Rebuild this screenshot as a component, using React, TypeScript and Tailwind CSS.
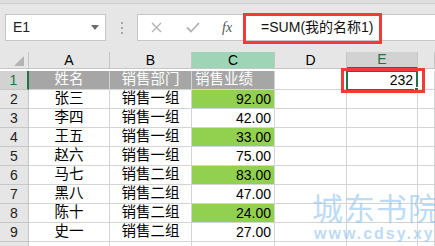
import React from "react";

const rows = [
  { n: "2", name: "张三", dept: "销售一组", v: "92.00", hi: true },
  { n: "3", name: "李四", dept: "销售一组", v: "42.00", hi: false },
  { n: "4", name: "王五", dept: "销售一组", v: "33.00", hi: true },
  { n: "5", name: "赵六", dept: "销售一组", v: "75.00", hi: false },
  { n: "6", name: "马七", dept: "销售二组", v: "83.00", hi: true },
  { n: "7", name: "黑八", dept: "销售二组", v: "47.00", hi: false },
  { n: "8", name: "陈十", dept: "销售二组", v: "24.00", hi: true },
  { n: "9", name: "史一", dept: "销售二组", v: "27.00", hi: false },
  { n: "", name: "", dept: "", v: "", hi: false },
];

const cell = "border-r border-b border-[#d4d4d4] flex items-center";
const rowHead = "border-r border-b border-[#c6c6c6] bg-[#e6e6e6] flex items-center justify-center text-[14px] text-[#222]";
const colHead = "border-r border-b border-[#c6c6c6] flex items-center justify-center text-[14px]";

export default function App() {
  return (
    <div
      className="relative w-[435px] h-[246px] overflow-hidden bg-[#e6e6e6] text-black"
      style={{ fontFamily: '"Liberation Sans", "Noto Sans CJK SC", sans-serif' }}
    >
      <div className="h-[4px] bg-[#dedede] border-b border-[#cccccc]" />

      {/* formula bar */}
      <div className="h-[48px] flex items-start pt-[10px]">
        <div className="ml-[5px] w-[101px] h-[27px] bg-white border border-[#c6c6c6] flex items-center pl-[7px] pr-[6px]">
          <span className="text-[14px] text-[#222]">E1</span>
          <svg className="ml-auto" width="8" height="5" viewBox="0 0 8 5">
            <path d="M0 0 L8 0 L4 5 Z" fill="#6b6b6b" />
          </svg>
        </div>
        <div className="w-[31px] h-[27px] flex flex-col items-center justify-center gap-[3px]">
          <span className="w-[2px] h-[2px] bg-[#a8a8a8]" />
          <span className="w-[2px] h-[2px] bg-[#a8a8a8]" />
          <span className="w-[2px] h-[2px] bg-[#a8a8a8]" />
        </div>
        <div className="flex-1 h-[27px] bg-white border border-[#c6c6c6] border-r-0 flex items-center">
          <svg className="ml-[13px]" width="11" height="11" viewBox="0 0 11 11">
            <path d="M1 1 L10 10 M10 1 L1 10" stroke="#b3b3b3" strokeWidth="1.4" />
          </svg>
          <svg className="ml-[24px]" width="14" height="11" viewBox="0 0 14 11">
            <path d="M1 5.5 L5 9.5 L13 1" stroke="#b3b3b3" strokeWidth="1.8" fill="none" />
          </svg>
          <span
            className="ml-[22px] text-[14px] italic text-[#555]"
            style={{ fontFamily: '"Liberation Serif", serif' }}
          >
            fx
          </span>
          <span className="ml-[29px] text-[14px] text-[#111] whitespace-nowrap">=SUM(我的名称1)</span>
        </div>
      </div>

      {/* sheet grid */}
      <div className="grid grid-cols-[29px_81px_82px_83px_72px_71px_1fr] auto-rows-[19px] bg-white">
        {/* column headers */}
        <div className="h-[17px] border-r border-b border-[#c6c6c6] bg-[#e6e6e6] flex items-end justify-end pr-[4px] pb-[2px]">
          <svg width="10" height="10" viewBox="0 0 10 10">
            <path d="M10 0 L10 10 L0 10 Z" fill="#b4b4b4" />
          </svg>
        </div>
        <div className={`${colHead} h-[17px] bg-[#e6e6e6]`}>A</div>
        <div className={`${colHead} h-[17px] bg-[#e6e6e6]`}>B</div>
        <div className={`${colHead} h-[17px] bg-[#9fd5b7]`}>C</div>
        <div className={`${colHead} h-[17px] bg-[#e6e6e6]`}>D</div>
        <div className={`${colHead} h-[17px] bg-[#d2d2d2] text-[#217346] border-b-2 border-b-[#217346]`}>E</div>
        <div className={`${colHead} h-[17px] bg-[#e6e6e6]`}></div>

        {/* row 1 */}
        <div className="border-b border-[#c6c6c6] bg-[#d2d2d2] border-r-2 border-r-[#217346] flex items-center justify-center text-[14px] text-[#217346]">
          1
        </div>
        <div className={`${cell} bg-[#a6a6a6] text-white text-[14.5px] justify-center`}>姓名</div>
        <div className={`${cell} bg-[#a6a6a6] text-white text-[14.5px] justify-center`}>销售部门</div>
        <div className={`${cell} bg-[#a6a6a6] text-white text-[14.5px] pl-[3px]`}>销售业绩</div>
        <div className={cell}></div>
        <div className="relative border-2 border-[#217346] flex items-center justify-end pr-[3px] text-[14px] -ml-[1px] -mt-[1px] h-[21px]">
          232
          <span className="absolute -right-[3px] -bottom-[3px] w-[5px] h-[5px] bg-[#217346] border border-white" />
        </div>
        <div className={cell}></div>

        {rows.map((r, i) => (
          <React.Fragment key={i}>
            <div className={rowHead}>{r.n}</div>
            <div className={`${cell} justify-center text-[14.5px]`}>{r.name}</div>
            <div className={`${cell} justify-center text-[14.5px]`}>{r.dept}</div>
            <div className={`${cell} justify-end pr-[3px] text-[14px] ${r.hi ? "bg-[#92d050]" : ""}`}>{r.v}</div>
            <div className={cell}></div>
            <div className={cell}></div>
            <div className={cell}></div>
          </React.Fragment>
        ))}
      </div>

      {/* annotations */}
      <div className="absolute left-[243px] top-[13px] w-[139px] h-[31px] border-[3px] border-[#f23a3a]" />
      <div className="absolute left-[341px] top-[68px] w-[84px] h-[25px] border-[3px] border-[#f23a3a]" />

      {/* watermark */}
      <div className="absolute left-[312px] top-[194px] leading-none whitespace-nowrap pointer-events-none text-[#8fc3ee]/60">
        <div className="text-[31px] tracking-[1px]">城东书院</div>
        <div className="text-[16px] font-bold tracking-[2px] mt-[1px] ml-[2px]">www.cdsy.xyz</div>
      </div>
    </div>
  );
}
